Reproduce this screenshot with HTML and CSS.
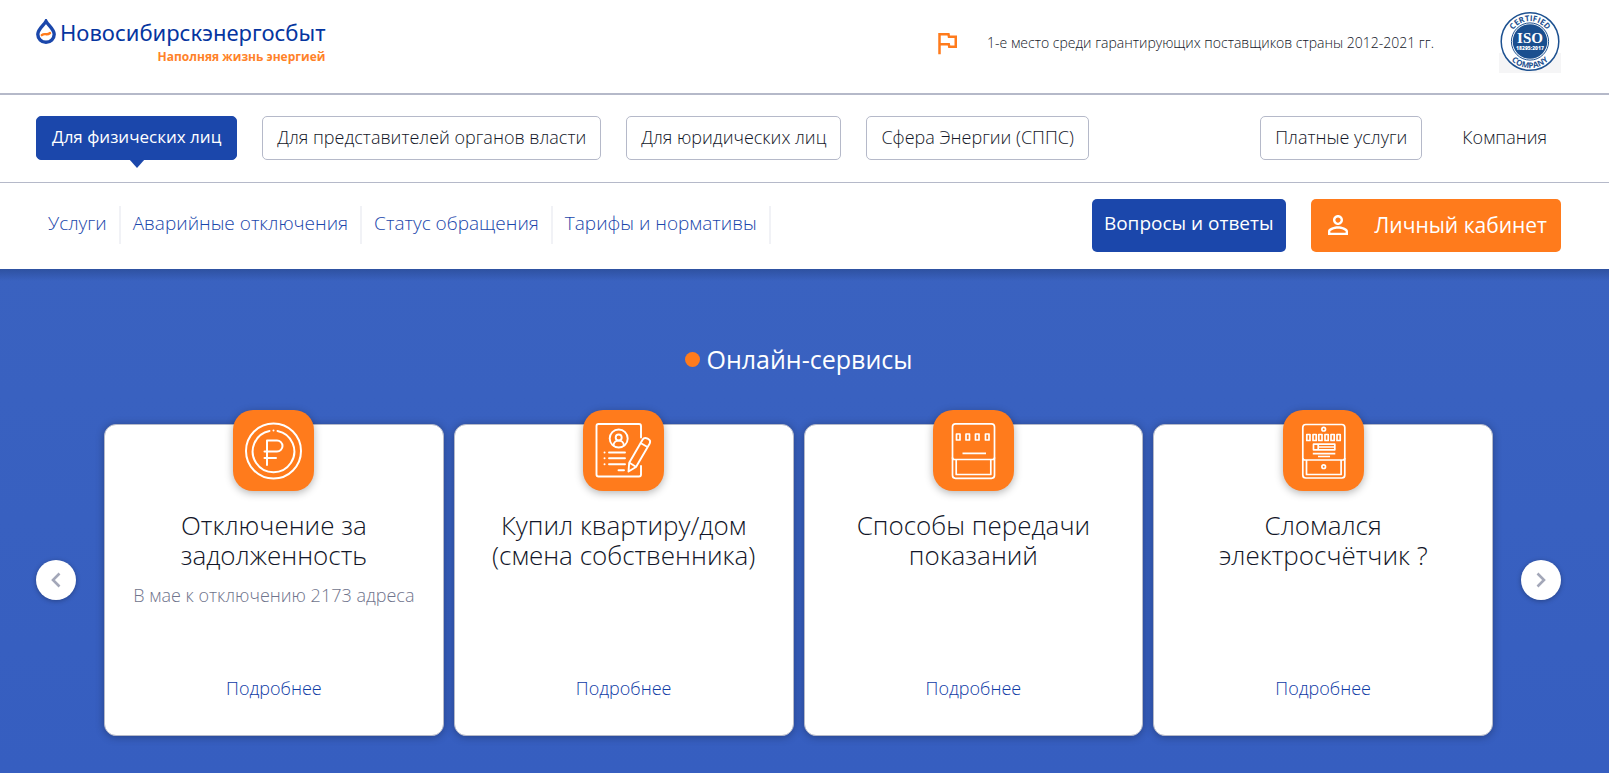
FILE: index.html
```html
<!DOCTYPE html>
<html lang="ru">
<head>
<meta charset="utf-8">
<meta name="viewport" content="width=device-width, initial-scale=1">
<title>Новосибирскэнергосбыт</title>
<link rel="stylesheet" href="styles.css">
</head>
<body>
<header class="site-header">
  <div class="topbar">
    <a class="logo" href="#">
      <svg class="logo-drop" viewBox="0 0 20 25" aria-hidden="true">
        <path d="M10 2.200C7.800 6.300 1.800 10 1.800 15.300a8.200 8 0 0 0 16.400 0C18.200 10 12.200 6.300 10 2.200Z" fill="none" stroke="#1b47ab" stroke-width="3.400"/>
        <path d="M5.800 16.200c1.600-1.500 3-1.200 4.300-1s2.400.1 3.900-1.200" fill="none" stroke="#ff7b1c" stroke-width="2.400" stroke-linecap="round"/>
      </svg>
      <span class="logo-text">
        <span class="logo-name">Новосибирскэнергосбыт</span>
        <span class="logo-tagline">Наполняя жизнь энергией</span>
      </span>
    </a>
    <div class="award">
      <svg class="award-icon" viewBox="0 0 24 24" aria-hidden="true"><path fill="#ff7b1c" d="M12.360 6l.4 2H18v6h-3.360l-.4-2H7V6h5.360M14 4H5v17h2v-7h5.600l.4 2h7V6h-5.600L14 4z"/></svg>
      <span>1-е место среди гарантирующих поставщиков страны 2012-2021 гг.</span>
    </div>
    <svg class="iso" viewBox="0 0 62 62" role="img" aria-label="ISO 18295:2017">
      <path d="M0 42h62v20H0z" fill="#f5f5f6"/>
      <circle cx="31" cy="30.500" r="28.800" fill="#fff" stroke="#1d5190" stroke-width="1.500"/>
      <circle cx="31" cy="30.500" r="18.600" fill="none" stroke="#1d5190" stroke-width="1"/>
      <circle cx="31" cy="30.500" r="17.300" fill="#1a4f8f"/>
      <path id="arc-top" d="M10.600 30.500a20.400 20.400 0 0 1 40.800 0" fill="none"/>
      <path id="arc-bottom" d="M4.400 30.500a26.600 26.600 0 0 0 53.200 0" fill="none"/>
      <text class="iso-ring"><textPath href="#arc-top" startOffset="50%" text-anchor="middle">CERTIFIED</textPath></text>
      <text class="iso-ring"><textPath href="#arc-bottom" startOffset="50%" text-anchor="middle">COMPANY</textPath></text>
      <text class="iso-main" x="31" y="31.500" text-anchor="middle">ISO</text>
      <text class="iso-sub" x="31" y="38.500" text-anchor="middle">18295:2017</text>
    </svg>
  </div>
  <nav class="audience" aria-label="Разделы">
    <a class="tab tab-active" href="#">Для физических лиц</a>
    <a class="tab" href="#">Для представителей органов власти</a>
    <a class="tab" href="#">Для юридических лиц</a>
    <a class="tab" href="#">Сфера Энергии (СППС)</a>
    <a class="tab tab-right" href="#">Платные услуги</a>
    <a class="tab tab-plain" href="#">Компания</a>
  </nav>
  <nav class="menu" aria-label="Меню">
    <div class="menu-links">
      <a href="#">Услуги</a>
      <a href="#">Аварийные отключения</a>
      <a href="#">Статус обращения</a>
      <a href="#">Тарифы и нормативы</a>
    </div>
    <a class="btn btn-faq" href="#">Вопросы и ответы</a>
    <a class="btn btn-account" href="#">
      <svg viewBox="0 0 24 24" aria-hidden="true"><path fill="#fff" d="M12 5.900c1.160 0 2.100.940 2.100 2.100s-.940 2.100-2.100 2.100S9.900 9.160 9.900 8s.940-2.100 2.100-2.100m0 9c2.970 0 6.100 1.460 6.100 2.100v1.100H5.900V17c0-.640 3.130-2.100 6.100-2.100M12 4C9.790 4 8 5.790 8 8s1.790 4 4 4 4-1.790 4-4-1.790-4-4-4zm0 9c-2.670 0-8 1.340-8 4v3h16v-3c0-2.660-5.330-4-8-4z"/></svg>
      <span>Личный кабинет</span>
    </a>
  </nav>
</header>
<main class="services">
  <h1 class="services-title"><span class="dot"></span>Онлайн-сервисы</h1>
  <div class="carousel">
    <button class="arrow" type="button" aria-label="Назад"><svg viewBox="0 0 24 24"><path fill="none" stroke="#a3a7b8" stroke-width="2.600" d="M15.500 5.500 9 12l6.500 6.500"/></svg></button>
    <div class="cards">
      <article class="card">
        <div class="card-icon">
          <svg viewBox="0 0 81 81" fill="none" stroke="#fff" stroke-width="2" stroke-linecap="round" stroke-linejoin="round" aria-hidden="true">
            <circle cx="40.500" cy="41" r="27.500"/>
            <path d="M36.500 21A20.800 20.800 0 1 0 44.500 21"/>
            <path d="M40.500 20.500v.1"/>
            <path d="M34 55V30.500h10a5.500 5.500 0 0 1 0 11H31.500M31.500 48H43"/>
          </svg>
        </div>
        <h2>Отключение за задолженность</h2>
        <p>В мае к отключению 2173 адреса</p>
        <a class="more" href="#">Подробнее</a>
      </article>
      <article class="card">
        <div class="card-icon">
          <svg viewBox="0 0 81 81" fill="none" stroke="#fff" stroke-width="1.900" stroke-linecap="round" stroke-linejoin="round" aria-hidden="true">
            <path d="M58 27.500V16a2 2 0 0 0-2-2H15.500a2 2 0 0 0-2 2v48.500a2 2 0 0 0 2 2H56a2 2 0 0 0 2-2V56"/>
            <circle cx="35.700" cy="28.500" r="9"/>
            <circle cx="35.700" cy="27.500" r="3"/>
            <path d="M30.500 35.500c.3-6.500 10.100-6.500 10.400 0M26 42.500h16M26 48.300h16M26 54.200h16M35.500 60.200H41M21.500 42.500h.1M21.500 48.300h.1M21.500 54.200h.1"/>
            <path d="M59.700 29.500c1.800-3.200 9.100-.5 7 4L53 57l-7.500 4.500.7-8.700ZM57.500 33l7 4M46.500 52.800l6.300 4"/>
          </svg>
        </div>
        <h2>Купил квартиру/дом (смена собственника)</h2>
        <a class="more" href="#">Подробнее</a>
      </article>
      <article class="card">
        <div class="card-icon">
          <svg viewBox="0 0 81 81" fill="none" stroke="#fff" stroke-width="1.700" stroke-linejoin="round" aria-hidden="true">
            <rect x="19.500" y="13.800" width="42" height="54.500" rx="3"/>
            <path d="M19.500 47.500a2 2 0 0 0 2 2h38a2 2 0 0 0 2-2M23.200 50v14.500h34.600V50M29.500 43.300h23.500"/>
            <path d="M23.500 24h3.500v6h-3.500zM33 24h3.500v6H33zM42.500 24H46v6h-3.500zM52.500 24H56v6h-3.500z"/>
          </svg>
        </div>
        <h2>Способы передачи показаний</h2>
        <a class="more" href="#">Подробнее</a>
      </article>
      <article class="card">
        <div class="card-icon">
          <svg viewBox="0 0 81 81" fill="none" stroke="#fff" stroke-width="1.700" stroke-linejoin="round" aria-hidden="true">
            <rect x="19.800" y="14.500" width="42" height="53.500" rx="3"/>
            <path d="M19.800 48a2 2 0 0 0 2 2h38a2 2 0 0 0 2-2M23.500 50v14.500h34.600V50"/>
            <circle cx="40.700" cy="19.200" r="1.800"/>
            <circle cx="40.700" cy="56.700" r="1.800"/>
            <path d="M23.800 24.500h3.200v6h-3.200zM30 24.500h3.200v6H30zM35.800 24.500H39v6h-3.200zM42 24.500h3.200v6H42zM48 24.500h3.200v6H48zM54 24.500h3.200v6H54zM30.500 34.200h21.300v5.600H30.500zM35.200 34.200v5.600M35.200 37h16.600M29.800 43.700h22.500M35 46.500h12"/>
          </svg>
        </div>
        <h2>Сломался электросчётчик&nbsp;?</h2>
        <a class="more" href="#">Подробнее</a>
      </article>
    </div>
    <button class="arrow" type="button" aria-label="Вперёд"><svg viewBox="0 0 24 24"><path fill="none" stroke="#a3a7b8" stroke-width="2.600" d="M8.500 5.500 15 12l-6.500 6.500"/></svg></button>
  </div>
</main>
</body>
</html>
```

FILE: styles.css
```css
* {
  box-sizing: border-box;
}

body {
  margin: 0;
  min-height: 100vh;
  display: flex;
  flex-direction: column;
  font-family: "Open Sans", "Noto Sans", sans-serif;
  font-size: 18px;
  font-weight: 300;
  line-height: 24px;
  color: #121628;
  background: #fff;
}

a {
  color: inherit;
  text-decoration: none;
}

.topbar,
.audience,
.menu,
.services {
  padding-left: 36px;
  padding-right: 48px;
}

.topbar {
  display: flex;
  align-items: center;
  height: 95px;
  padding-bottom: 9px;
  border-bottom: 2px solid #b5b9c9;
}

.logo {
  display: flex;
  gap: 4px;
  margin-top: 4px;
  margin-right: auto;
}

.logo-drop {
  width: 20px;
  height: 25px;
}

.logo-text {
  display: flex;
  flex-direction: column;
}

.logo-name {
  font-family: "Noto Sans", "Open Sans", sans-serif;
  font-size: 22px;
  font-weight: 400;
  line-height: 26px;
  color: #0535a0;
}

.logo-tagline {
  align-self: flex-end;
  font-size: 12px;
  font-weight: 700;
  line-height: 24px;
  color: #ff8229;
}

.award {
  display: flex;
  align-items: center;
  gap: 25px;
  margin-right: 65px;
  padding-top: 2px;
  font-size: 14px;
}

.award-icon {
  width: 30px;
  height: 30px;
}

.iso {
  width: 62px;
  height: 62px;
}

.iso-ring {
  font-family: "Open Sans", sans-serif;
  font-size: 8px;
  font-weight: 700;
  fill: #1d5190;
}

.iso-main {
  font-family: "Liberation Serif", serif;
  font-size: 15px;
  font-weight: 700;
  fill: #fff;
}

.iso-sub {
  font-family: "Open Sans", sans-serif;
  font-size: 5px;
  font-weight: 800;
  fill: #fff;
}

.audience {
  display: flex;
  gap: 25px;
  padding-top: 21px;
  padding-bottom: 22px;
  border-bottom: 1px solid #b5b9c9;
}

.tab {
  position: relative;
  padding: 8px 14px 10px;
  border: 1px solid #b5b9c9;
  border-radius: 5px;
}

.tab-active {
  padding-left: 15px;
  padding-right: 15px;
  border-color: #1b47ab;
  background: #1b47ab;
  color: #fff;
  font-size: 17px;
  font-weight: 400;
}

.tab-active::after {
  content: "";
  position: absolute;
  top: 100%;
  left: 50%;
  margin-left: -8px;
  border: 8px solid transparent;
  border-top: 9px solid #1b47ab;
  border-bottom: 0;
}

.tab-right {
  margin-left: auto;
}

.tab-plain {
  padding-right: 13px;
  border-color: transparent;
}

.menu {
  display: flex;
  align-items: center;
  gap: 25px;
  padding-top: 16px;
  padding-bottom: 17px;
}

.menu-links {
  display: flex;
  margin-right: auto;
  margin-bottom: 2px;
  color: #1b47ab;
  font-size: 19px;
}

.menu-links a {
  padding: 5px 12px 9px;
  border-right: 2px solid #f1f2f6;
}

.btn {
  display: flex;
  align-items: center;
  height: 53px;
  padding: 0 14px;
  border-radius: 5px;
  color: #fff;
  font-weight: 400;
}

.btn-faq {
  padding: 0 12px 6px;
  background: #1b47ab;
  font-size: 19px;
}

.btn-account {
  gap: 22px;
  padding-left: 12px;
  padding-bottom: 2px;
  background: #ff7b1c;
  font-size: 21px;
}

.btn-account svg {
  width: 30px;
  height: 30px;
}

.services {
  flex: 1;
  padding-top: 72px;
  padding-bottom: 32px;
  background: linear-gradient(rgba(38, 70, 140, 0.6) 0, rgba(45, 85, 168, 0) 12px), linear-gradient(#3a62c0, #365ec0);
}

.services-title {
  display: flex;
  align-items: center;
  justify-content: center;
  gap: 7px;
  margin: 0 0 47px;
  color: #fff;
  font-size: 25px;
  font-weight: 400;
  line-height: 36px;
}

.dot {
  width: 15px;
  height: 15px;
  border-radius: 50%;
  background: #ff7b1c;
}

.carousel {
  display: flex;
  align-items: center;
  gap: 28px;
}

.arrow {
  display: grid;
  place-items: center;
  flex: none;
  width: 40px;
  height: 40px;
  padding: 0;
  border: 0;
  border-radius: 50%;
  background: #fff;
  box-shadow: 0 1px 5px rgba(0, 0, 0, 0.3);
}

.arrow svg {
  width: 24px;
  height: 24px;
}

.cards {
  flex: 1;
  display: grid;
  grid-template-columns: repeat(4, 1fr);
  gap: 10px;
}

.card {
  display: flex;
  flex-direction: column;
  align-items: center;
  min-height: 312px;
  padding: 0 24px 35px;
  border: 1px solid #b5b9c9;
  border-radius: 12px;
  background: #fff;
  box-shadow: 0 1px 8px rgba(0, 0, 0, 0.3);
  text-align: center;
}

.card-icon {
  width: 81px;
  height: 81px;
  margin-top: -15px;
  border-radius: 20px;
  background: #ff7b1c;
  box-shadow: 0 2px 8px rgba(0, 0, 0, 0.3);
}

.card-icon svg {
  display: block;
  width: 100%;
}

.card h2 {
  max-width: 280px;
  margin: 19px 0 13px;
  font-size: 26px;
  font-weight: 300;
  line-height: 30px;
}

.card p {
  margin: 0;
  color: #6f748c;
}

.more {
  margin-top: auto;
  color: #0f3ba6;
}
```
